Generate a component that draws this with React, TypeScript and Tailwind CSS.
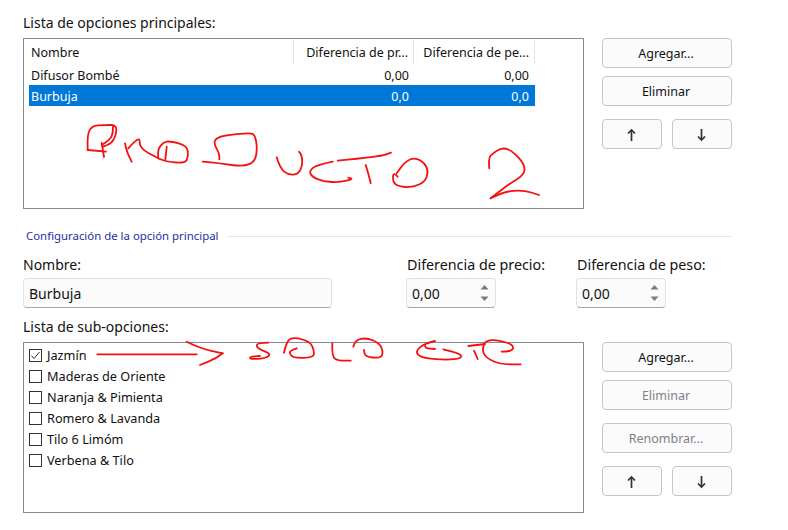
const subOptions = ['Jazmín', 'Maderas de Oriente', 'Naranja & Pimienta', 'Romero & Lavanda', 'Tilo 6 Limóm', 'Verbena & Tilo']

type Pt = [number, number]

// marcas a mano encima de la captura, trazo por trazo
const strokes: Pt[][] = [
  // P
  [[87.7, 150], [87, 135], [92, 125.7], [104, 125], [116.7, 125], [116, 135], [111.7, 143.3], [103, 146.7]],
  [[113, 126.7], [113, 135], [108, 141], [101.7, 145]],
  [[87.7, 150], [106, 151.7]],
  [[101.7, 143], [104, 157]],
  // R
  [[125, 143.3], [126.7, 151.7], [131.7, 161.7]],
  [[128.3, 148.3], [140, 135], [139.3, 148.3], [158.3, 158.3]],
  // O
  [[158.3, 158.3], [157.3, 150], [163.3, 142.3], [170, 141], [187.3, 145.7], [188.3, 156.7], [185, 163.3], [166.7, 161.7], [158.3, 158.3]],
  [[166.7, 146.7], [165.3, 160]],
  // D
  [[202.7, 161.7], [220, 163.3], [243.3, 166.7], [255, 161.7], [257.3, 148.3], [255, 135], [250, 132.7], [223.3, 135.7], [215, 139], [214.3, 145], [219.3, 153.3], [219.3, 159.3]],
  // U
  [[276.7, 157.3], [280, 168.3], [288.3, 175], [298.3, 174.3], [302.7, 165], [301.7, 155], [299, 151.7]],
  // C
  [[332.7, 161.7], [316.7, 165], [309.3, 170.7], [311.7, 176.7], [323.3, 181.7], [340, 182.3], [353.3, 179], [348.3, 177.7]],
  // T
  [[337.7, 160.7], [380, 156.7], [391, 152.7]],
  [[365.7, 165], [368.3, 173.3], [370.7, 183.3]],
  // O
  [[397.7, 176.7], [393.3, 171.7], [392.7, 181.7], [398.3, 186.7], [413.3, 187.3], [425, 181.7], [428.3, 171.7], [425, 163.3], [415, 157.3], [405, 161.7], [396.7, 173.3]],
  // 2
  [[489.3, 168.3], [488.3, 158.3], [493.3, 152.7], [503.3, 147.3], [513.3, 151.7], [525, 165], [524, 175], [510, 183.3], [490.7, 198.3]],
  [[490.7, 198.3], [503.3, 191.7], [523.3, 190], [539, 195]],
  // flecha
  [[97.3, 354.3], [196.7, 354.3]],
  [[186.7, 341.7], [200, 348.3], [222.7, 353.3]],
  [[222.7, 353.3], [216.7, 358.3], [200, 365]],
  // S
  [[268.3, 342.7], [256.7, 342.7], [256.7, 348.3], [271.7, 354], [265, 358.3], [250, 359.3], [250, 356.7], [260, 356]],
  // O
  [[284, 352.7], [286.7, 340], [295, 337.3], [310, 341.7], [314, 350], [314, 357.3], [293.3, 358.3], [288.3, 351.7], [296.7, 348.3]],
  // L
  [[332.3, 343.3], [331.7, 356.7], [338.3, 360.7], [350.7, 360.7]],
  // O
  [[353.3, 346.7], [355, 340], [366.7, 337.7], [380, 343.3], [383.3, 353.3], [380, 358.3], [365, 356.7], [364, 350]],
  // E
  [[435, 341], [425, 343.3], [416.7, 350], [417.3, 355], [425, 358.3], [446.7, 360], [461.7, 358.3], [460.7, 354], [443.3, 349.3]],
  [[425, 345.7], [425, 348.3], [435, 349]],
  // S T
  [[468.3, 346], [485, 344]],
  [[474, 350.7], [477.7, 359]],
  // E
  [[501.7, 351.7], [513.3, 351.7], [512.7, 343.3], [486.7, 338.3], [481.7, 350], [486.7, 358.3], [500, 364.3], [520.7, 364.3]],
]

function smooth(pts: Pt[]) {
  let d = `M${pts[0][0]} ${pts[0][1]}`
  for (let i = 1; i < pts.length - 1; i++) {
    const mx = (pts[i][0] + pts[i + 1][0]) / 2
    const my = (pts[i][1] + pts[i + 1][1]) / 2
    d += ` Q${pts[i][0]} ${pts[i][1]} ${mx} ${my}`
  }
  const last = pts[pts.length - 1]
  return d + ` L${last[0]} ${last[1]}`
}

function Scribbles() {
  return (
    <svg className="absolute left-0 top-0 pointer-events-none" width="788" height="530" fill="none" stroke="#f50f0f" strokeWidth="1.8" strokeLinecap="round" strokeLinejoin="round">
      {strokes.map((s, i) => <path key={i} d={smooth(s)} />)}
    </svg>
  )
}

function Btn({ label, disabled, className = 'w-[130px]' }: { label: React.ReactNode; disabled?: boolean; className?: string }) {
  return (
    <button className={`h-[30px] flex items-center justify-center pt-[2px] pr-[2px] rounded-[4px] border border-[#c6c6c6] bg-[#fbfbfb] text-[12.5px] ${disabled ? 'text-[#80808a]' : 'text-[#111]'} ${className}`}>
      {label}
    </button>
  )
}

function Arrow({ down }: { down?: boolean }) {
  return (
    <svg width="11" height="14" viewBox="0 0 11 14" fill="none" stroke="#333" strokeWidth="1.7" className={down ? 'rotate-180' : ''}>
      <path d="M5.5 13 V2" />
      <path d="M2 5.5 L5.5 2 L9 5.5" />
    </svg>
  )
}

function ArrowRow() {
  return (
    <div className="flex gap-[10px]">
      <Btn className="w-[60px]" label={<Arrow />} />
      <Btn className="w-[60px]" label={<Arrow down />} />
    </div>
  )
}

function Spin({ value }: { value: string }) {
  return (
    <div className="w-[90px] h-[30px] flex items-center justify-between pl-[5px] pr-[5px] rounded-[4px] border border-[#e2e2e2] border-b-[#a8a8ac] bg-[#fbfbfb] text-[14px] text-[#111]">
      <span>{value}</span>
      <svg width="11" height="20" viewBox="0 0 11 20" fill="#7a7a7a">
        <path d="M5.5 2 L9.5 6.5 H1.5 Z" />
        <path d="M1.5 13.5 H9.5 L5.5 18 Z" />
      </svg>
    </div>
  )
}

export default function App() {
  return (
    <div className="relative w-[788px] h-[530px] overflow-hidden bg-white pl-[23px] pt-[13px] font-['Noto_Sans','Open_Sans',sans-serif] text-[#111]">
      <div className="text-[14px] leading-[20px] h-[25px]">Lista de opciones principales:</div>

      <div className="flex gap-[18px] w-[709px]">
        <div className="w-[561px] h-[171px] border border-[#868a91] pl-[5px] pt-[1px] text-[12.5px]">
          <div className="w-[506px] flex h-[24px] items-center">
            <div className="w-[265px] h-[24px] flex items-center pl-[2px] pt-[2px] border-r border-[#e5e5e5]">Nombre</div>
            <div className="w-[120px] h-[24px] flex items-center justify-end pr-[5px] pt-[2px] border-r border-[#e5e5e5] whitespace-nowrap overflow-hidden">Diferencia de pr...</div>
            <div className="w-[121px] h-[24px] flex items-center justify-end pr-[5px] pt-[2px] border-r border-[#e5e5e5] whitespace-nowrap overflow-hidden">Diferencia de pe...</div>
          </div>
          <div className="w-[506px] flex h-[21px] pt-[3px] items-center">
            <div className="w-[265px] pl-[2px]">Difusor Bombé</div>
            <div className="w-[120px] text-right pr-[5px]">0,00</div>
            <div className="w-[121px] text-right pr-[6px]">0,00</div>
          </div>
          <div className="w-[506px] flex h-[21px] pt-[3px] items-center bg-[#0078d7] text-white">
            <div className="w-[265px] pl-[2px]">Burbuja</div>
            <div className="w-[120px] text-right pr-[5px]">0,0</div>
            <div className="w-[121px] text-right pr-[6px]">0,0</div>
          </div>
        </div>
        <div className="flex flex-col w-[130px]">
          <Btn label="Agregar..." />
          <Btn label="Eliminar" className="w-[130px] mt-[8px]" />
          <div className="mt-[13px]"><ArrowRow /></div>
        </div>
      </div>

      <div className="flex items-center w-[709px] mt-[18px] h-[18px] pl-[3px] text-[11.4px] text-[#1c2fa0]">
        <span className="whitespace-nowrap pr-[8px]">Configuración de la opción principal</span>
        <div className="flex-1 h-px bg-[#e8e8e8]" />
      </div>

      <div className="flex mt-[10px] h-[53px]">
        <div className="w-[383px]">
          <div className="text-[14px] leading-[20px] h-[23px]">Nombre:</div>
          <div className="w-[309px] h-[30px] flex items-center pl-[5px] rounded-[4px] border border-[#e2e2e2] border-b-[#a8a8ac] bg-[#fbfbfb] text-[14px]">Burbuja</div>
        </div>
        <div className="w-[170px]">
          <div className="text-[14.3px] leading-[20px] h-[23px] pl-[1px] whitespace-nowrap">Diferencia de precio:</div>
          <Spin value="0,00" />
        </div>
        <div>
          <div className="text-[14.3px] leading-[20px] h-[23px] pl-[1px] whitespace-nowrap">Diferencia de peso:</div>
          <Spin value="0,00" />
        </div>
      </div>

      <div className="text-[14px] leading-[20px] h-[25px] mt-[9px]">Lista de sub-opciones:</div>

      <div className="flex gap-[18px] w-[709px]">
        <div className="w-[561px] h-[171px] border border-[#868a91] pl-[5px] pt-[2px] text-[12.7px]">
          {subOptions.map((s, i) => (
            <div key={s} className="flex items-center h-[21px] gap-[5px]">
              <div className="w-[13px] h-[13px] border border-[#333] flex items-center justify-center">
                {i === 0 && (
                  <svg width="11" height="11" viewBox="0 0 11 11" fill="none" stroke="#333" strokeWidth="1">
                    <path d="M1.5 5.5 L4 8.5 L9.5 2" />
                  </svg>
                )}
              </div>
              <span>{s}</span>
            </div>
          ))}
        </div>
        <div className="flex flex-col w-[130px]">
          <Btn label="Agregar..." />
          <Btn label="Eliminar" disabled className="w-[130px] mt-[8px]" />
          <Btn label="Renombrar..." disabled className="w-[130px] mt-[13px]" />
          <div className="mt-[13px]"><ArrowRow /></div>
        </div>
      </div>

      <Scribbles />
    </div>
  )
}
